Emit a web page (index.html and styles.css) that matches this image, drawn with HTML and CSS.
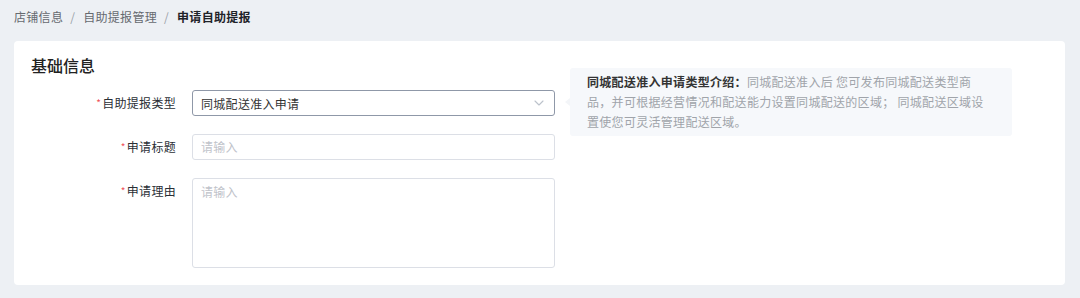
FILE: index.html
```html
<!DOCTYPE html>
<html lang="zh-CN">
<head>
<meta charset="utf-8">
<title>申请自助提报</title>
<link rel="stylesheet" href="styles.css">
</head>
<body>
<div class="page">
  <nav class="breadcrumb">
    <span class="crumb">店铺信息</span><span class="sep">/</span><span class="crumb">自助提报管理</span><span class="sep">/</span><span class="crumb current">申请自助提报</span>
  </nav>
  <section class="card">
    <h2 class="card-title">基础信息</h2>
    <div class="form">
      <div class="row">
        <label class="label"><span class="req">*</span>自助提报类型</label>
        <div class="control has-pop">
          <div class="select">
            <span class="select-value">同城配送准入申请</span>
            <svg class="chevron" width="10" height="6" viewBox="0 0 10 6"><path d="M1 1l4 4 4-4" fill="none" stroke="#bcc2cb" stroke-width="1.1" stroke-linecap="round" stroke-linejoin="round"/></svg>
          </div>
          <div class="pop">
            <span class="pop-arrow"></span>
            <p class="pop-text"><b class="pop-key">同城配送准入申请类型介绍：</b>同城配送准入后 您可发布同城配送类型商品，并可根据经营情况和配送能力设置同城配送的区域； 同城配送区域设置使您可灵活管理配送区域。</p>
          </div>
        </div>
      </div>
      <div class="row">
        <label class="label"><span class="req">*</span>申请标题</label>
        <div class="control">
          <div class="input"><span class="placeholder">请输入</span></div>
        </div>
      </div>
      <div class="row">
        <label class="label"><span class="req">*</span>申请理由</label>
        <div class="control">
          <div class="textarea"><span class="placeholder">请输入</span></div>
        </div>
      </div>
    </div>
  </section>
</div>
</body>
</html>
```

FILE: styles.css
```css
* { box-sizing: border-box; }
html, body { margin: 0; padding: 0; }
body {
  background: #edf0f4;
  font-family: "Noto Sans CJK SC", "Noto Sans", "Liberation Sans", sans-serif;
  font-size: 12px;
  letter-spacing: 0.3px;
  color: #333;
  width: 1080px;
  height: 298px;
  overflow: hidden;
}
.page { padding: 7px 15px 0 14px; }
.breadcrumb {
  display: flex;
  align-items: center;
  height: 20px;
  line-height: 20px;
  color: #666a70;
}
.sep { padding: 0 8px 0 7px; color: #9aa0a8; }
.current { color: #1f2329; font-weight: 700; }
.card {
  margin-top: 14px;
  background: #fff;
  border-radius: 4px;
  padding: 13px 17px 17px 17px;
  height: 244px;
}
.card-title {
  margin: 0;
  font-size: 16px;
  font-weight: 500;
  line-height: 22px;
  color: #222;
  letter-spacing: 0;
}
.form {
  margin-top: 14px;
  display: flex;
  flex-direction: column;
  gap: 18px;
}
.row { display: flex; align-items: flex-start; gap: 16px; }
.label {
  width: 145px;
  text-align: right;
  line-height: 26px;
  color: #2b2f36;
}
.req { color: #f0505a; font-size: 10px; margin-right: 1px; vertical-align: 1px; }
.control { width: 363px; position: relative; }
.select, .input, .textarea {
  width: 100%;
  border: 1px solid #dcdfe6;
  border-radius: 3px;
  background: #fff;
  padding: 0 9px 0 8px;
}
.select {
  height: 26px;
  border-color: #8f98a8;
  display: flex;
  align-items: center;
  justify-content: space-between;
  color: #333;
}
.chevron { margin-right: 1px; }
.input { height: 26px; line-height: 24px; }
.textarea { height: 90px; line-height: 24px; padding-top: 1px; }
.placeholder { color: #bfc3ca; }
.pop {
  position: absolute;
  left: 378px;
  top: -22px;
  width: 442px;
  height: 68px;
  background: #f6f8fb;
  border-radius: 3px;
  padding: 4px 25px 4px 17px;
}
.pop-arrow {
  position: absolute;
  left: -5px;
  top: 30px;
  width: 0;
  height: 0;
  border-top: 4px solid transparent;
  border-bottom: 4px solid transparent;
  border-right: 5px solid #f3f5f8;
}
.pop-text {
  margin: 0;
  line-height: 20px;
  color: #a0a4aa;
}
.pop-key { color: #333; font-weight: 700; }
```
